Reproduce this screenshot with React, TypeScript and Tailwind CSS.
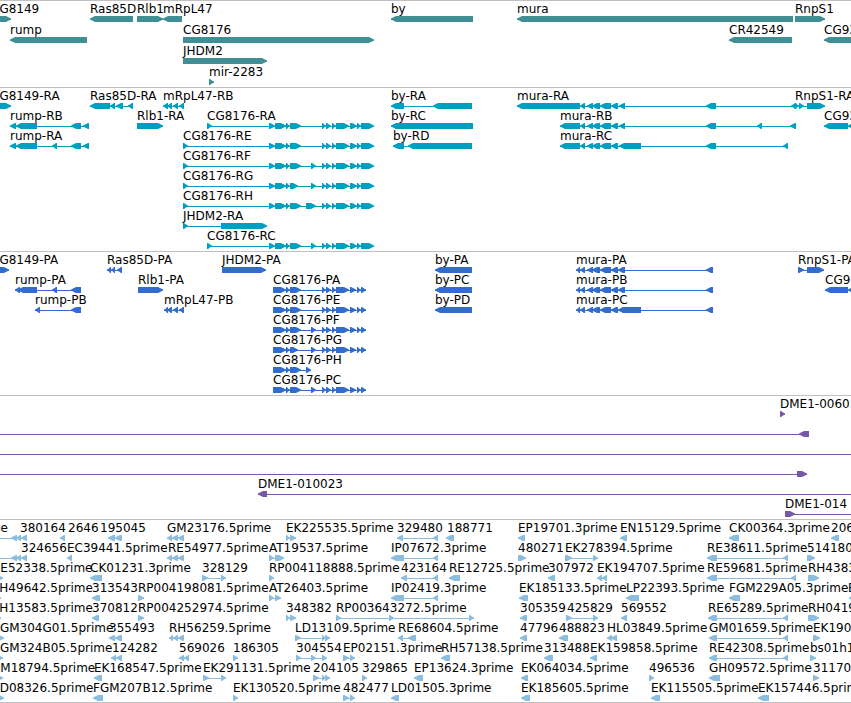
type Dir = "L" | "R";
type Exon = [number, number];

interface Feature {
  name?: string;
  at: number;
  dir: Dir;
  exons: Exon[];
  span?: Exon;
}

interface TrackData {
  title: string;
  color: string;
  rowClass: string;
  padClass: string;
  rows: Feature[][];
}

const f = (name: string, at: number, dir: Dir, ...exons: Exon[]): Feature => ({ name, at, dir, exons });

const spanned = (name: string | undefined, at: number, dir: Dir, span: Exon, ...exons: Exon[]): Feature => ({
  name,
  at,
  dir,
  exons,
  span,
});

const genes: Feature[][] = [
  [
    f("CG8149", -9, "R", [-9, 11]),
    f("Ras85D", 90, "L", [90, 133]),
    f("Rlb1", 137, "R", [137, 163]),
    f("mRpL47", 163, "L", [163, 182]),
    f("by", 391, "L", [391, 473]),
    f("mura", 517, "L", [517, 793]),
    f("RnpS1", 795, "R", [795, 825]),
  ],
  [
    f("rump", 10, "L", [10, 87]),
    f("CG8176", 183, "R", [183, 374]),
    f("CR42549", 729, "L", [729, 792]),
    f("CG9373", 824, "L", [824, 880]),
  ],
  [f("JHDM2", 183, "R", [183, 267])],
  [f("mir-2283", 209, "R", [209, 214])],
];

const cgHead: Exon[] = [[269, 275], [275, 286], [286, 290], [290, 301]];
const cgHeadShort: Exon[] = [[269, 275], [275, 286], [286, 290], [290, 298]];
const cgTail: Exon[] = [[322, 326], [326, 331], [332, 336], [336, 349], [350, 357], [357, 361], [361, 374]];
const muraMid: Exon[] = [[580, 585], [587, 593], [592, 600], [600, 611], [611, 618]];
const mrp: Exon[] = [[163, 168], [167, 172], [173, 178], [179, 184]];

const transcripts: Feature[][] = [
  [
    f("CG8149-RA", -9, "R", [-9, 11]),
    f("Ras85D-RA", 90, "L", [90, 110], [110, 115], [116, 123], [128, 133]),
    f("mRpL47-RB", 163, "L", ...mrp),
    f("by-RA", 391, "L", [391, 404], [433, 472]),
    f("mura-RA", 517, "L", [517, 580], ...muraMid, [619, 625], [706, 716], [791, 796]),
    f("RnpS1-RA", 795, "R", [795, 799], [799, 804], [807, 825]),
  ],
  [
    f("rump-RB", 10, "L", [10, 16], [16, 37], [71, 81], [83, 89]),
    f("Rlb1-RA", 137, "R", [137, 163]),
    f("CG8176-RA", 207, "R", [207, 212], ...cgHead, ...cgTail),
    f("by-RC", 391, "L", [391, 473]),
    f("mura-RB", 560, "L", [560, 580], ...muraMid, [619, 625], [706, 716], [757, 762], [790, 796]),
    f("CG9373-RA", 824, "L", [824, 848], [848, 854]),
  ],
  [
    f("rump-RA", 10, "L", [10, 16], [16, 37], [52, 57], [71, 81], [83, 89]),
    f("CG8176-RE", 183, "R", [183, 188], ...cgHead, ...cgTail),
    f("by-RD", 393, "L", [393, 404], [408, 472]),
    f("mura-RC", 560, "L", [560, 580], ...muraMid, [619, 641], [706, 716], [783, 788]),
  ],
  [f("CG8176-RF", 183, "R", [183, 188], ...cgHead, [311, 316], ...cgTail)],
  [f("CG8176-RG", 183, "R", [183, 188], ...cgHeadShort, [311, 316], ...cgTail)],
  [f("CG8176-RH", 183, "R", [183, 188], ...cgHead, [306, 316], ...cgTail)],
  [f("JHDM2-RA", 183, "R", [183, 188], [221, 267])],
  [f("CG8176-RC", 207, "R", [207, 212], ...cgHead, [311, 316], ...cgTail)],
];

const pHead: Exon[] = [[273, 286], [286, 290], [290, 301]];
const pTail: Exon[] = [[322, 326], [326, 331], [332, 336], [336, 349], [350, 356], [357, 361], [361, 366]];
const pMura: Exon[] = [[576, 580], [580, 585], [587, 593], [592, 600], [600, 611], [611, 618]];

const proteins: Feature[][] = [
  [
    f("CG8149-PA", -9, "R", [-9, 9]),
    f("Ras85D-PA", 107, "L", [107, 111], [111, 115], [117, 122]),
    f("JHDM2-PA", 222, "R", [222, 266]),
    f("by-PA", 435, "L", [435, 472]),
    f("mura-PA", 576, "L", ...pMura, [618, 625], [706, 713]),
    f("RnpS1-PA", 798, "R", [798, 804], [807, 824]),
  ],
  [
    f("rump-PA", 15, "L", [15, 20], [18, 37], [52, 57], [71, 81]),
    f("Rlb1-PA", 138, "R", [138, 163]),
    f("CG8176-PA", 273, "R", ...pHead, ...pTail),
    f("by-PC", 435, "L", [435, 472]),
    f("mura-PB", 576, "L", ...pMura, [618, 625], [706, 713]),
    f("CG9373-PA", 825, "L", [825, 848], [848, 854]),
  ],
  [
    f("rump-PB", 35, "L", [35, 40], [71, 81]),
    f("mRpL47-PB", 164, "L", [164, 168], [167, 172], [173, 178], [179, 184]),
    f("CG8176-PE", 273, "R", ...pHead, ...pTail),
    f("by-PD", 435, "L", [435, 472]),
    f("mura-PC", 576, "L", ...pMura, [618, 641], [706, 713]),
  ],
  [f("CG8176-PF", 273, "R", ...pHead, [311, 316], ...pTail)],
  [f("CG8176-PG", 273, "R", [273, 286], [286, 290], [290, 298], [311, 316], ...pTail)],
  [f("CG8176-PH", 273, "R", ...pHead, [306, 311])],
  [f("CG8176-PC", 273, "R", ...pHead, [311, 316], ...pTail)],
];

const oligos: Feature[][] = [
  [f("DME1-0060", 780, "R", [780, 785])],
  [spanned(undefined, 0, "L", [-10, 809], [799, 809])],
  [spanned(undefined, 0, "R", [-10, 4000])],
  [spanned(undefined, 0, "R", [-10, 807], [797, 807])],
  [spanned("DME1-010023", 258, "L", [258, 4000], [258, 267])],
  [spanned("DME1-014", 785, "R", [785, 4000], [785, 795])],
];

const gmTriple: Exon[] = [[167, 172], [172, 178], [178, 184]];
const leftGroup: Exon[] = [[11, 17], [16, 21], [21, 27]];

const ests: Feature[][] = [
  [
    spanned("prime", -27, "L", [-10, 27], ...leftGroup),
    f("380164", 20, "L", [60, 65]),
    f("2646", 68, "L"),
    f("195045", 100, "L", [108, 115], [115, 122]),
    f("GM23176.5prime", 167, "L", ...gmTriple),
    f("EK225535.5prime", 286, "R", [286, 290], [290, 296]),
    f("329480", 397, "L", [397, 403], [433, 438]),
    f("188771", 447, "L", [446, 454]),
    f("EP19701.3prime", 518, "L", [518, 525]),
    f("EN15129.5prime", 620, "L", [620, 627]),
    f("CK00364.3prime", 729, "L", [729, 739]),
    f("206012", 831, "L", [831, 839]),
  ],
  [
    spanned("324656", 21, "L", [-10, 27], ...leftGroup),
    f("EC39441.5prime", 67, "L", [67, 72]),
    f("RE54977.5prime", 168, "L", ...gmTriple),
    f("AT19537.5prime", 269, "R", [269, 274], [275, 284]),
    f("IP07672.3prime", 391, "L", [391, 404], [433, 438]),
    f("480271", 518, "R", [518, 526]),
    f("EK278394.5prime", 565, "R", [565, 572], [593, 598]),
    f("RE38611.5prime", 707, "L", [707, 717], [783, 788]),
    f("514180", 807, "R", [807, 815]),
  ],
  [
    f("RE52338.5prime", -8, "R", [-5, 3]),
    f("CK01231.3prime", 90, "L", [90, 102]),
    f("328129", 202, "R", [202, 208], [221, 226]),
    f("RP004118888.5prime", 269, "R", [269, 274]),
    f("423164", 401, "L", [401, 407], [433, 438]),
    f("RE12725.5prime", 449, "L", [449, 460]),
    f("307972", 548, "L", [548, 555]),
    f("EK194707.5prime", 597, "L", [597, 602], [602, 607]),
    f("RE59681.5prime", 707, "L", [707, 717], [791, 796]),
    f("RH43831", 808, "R", [808, 819]),
  ],
  [
    f("RH49642.5prime", -9, "R", [-4, 1]),
    f("313543", 92, "L", [92, 100]),
    f("RP004198081.5prime", 138, "R", [138, 144]),
    f("AT26403.5prime", 269, "R", [269, 274], [275, 281]),
    f("IP02419.3prime", 391, "L", [391, 404], [433, 438]),
    f("EK185133.5prime", 519, "L", [519, 528]),
    f("LP22393.5prime", 626, "L", [626, 639]),
    f("FGM229A05.3prime", 729, "L", [729, 740]),
    f("EK", 848, "L", [849, 860]),
  ],
  [
    f("RH13583.5prime", -9, "R", [-4, 1]),
    f("370812", 92, "L", [92, 99]),
    f("RP004252974.5prime", 138, "R", [138, 144]),
    f("348382", 286, "R", [286, 290], [290, 296]),
    f("RP003643272.5prime", 336, "R", [336, 341], [389, 394], [469, 474]),
    f("305359", 520, "L", [520, 527]),
    f("425829", 567, "R", [566, 572], [593, 598]),
    f("569552", 621, "L", [621, 627]),
    f("RE65289.5prime", 708, "L", [708, 717], [783, 788]),
    f("RH04192", 808, "R", [808, 819]),
  ],
  [
    f("FGM304G01.5prime", -7, "R", [-4, 4]),
    f("355493", 109, "L", [109, 115], [115, 122]),
    f("RH56259.5prime", 169, "L", [169, 173], [173, 178], [178, 184]),
    f("LD13109.5prime", 295, "R", [295, 301], [322, 326], [325, 330]),
    f("RE68604.5prime", 398, "L", [398, 403], [408, 416]),
    f("47796", 520, "L", [520, 527]),
    f("488823", 559, "L", [559, 568]),
    f("HL03849.5prime", 607, "L", [607, 612], [611, 617]),
    f("GM01659.5prime", 709, "L", [709, 717], [783, 788]),
    f("EK190112", 813, "R", [813, 820]),
  ],
  [
    f("FGM324B05.5prime", -7, "R", [-4, 3]),
    f("124282", 112, "L", [111, 116], [116, 122]),
    f("569026", 179, "L", [179, 184], [184, 189]),
    f("186305", 233, "R", [233, 238]),
    f("304554", 296, "R", [296, 301], [311, 316], [322, 327]),
    f("EP02151.3prime", 343, "R", [343, 349], [350, 355]),
    f("RH57138.5prime", 441, "L", [441, 450]),
    f("313488", 544, "L", [544, 553]),
    f("EK159858.5prime", 590, "L", [590, 597]),
    f("RE42308.5prime", 709, "L", [709, 717], [783, 788]),
    f("bs01h10", 810, "R", [810, 816]),
  ],
  [
    f("GM18794.5prime", -9, "R", [-4, 3]),
    f("EK168547.5prime", 94, "L", [94, 102]),
    f("EK291131.5prime", 203, "R", [203, 209], [221, 226]),
    f("204105", 313, "R", [313, 319], [322, 326], [325, 330]),
    f("329865", 362, "R", [362, 367]),
    f("EP13624.3prime", 414, "L", [414, 423]),
    f("EK064034.5prime", 521, "L", [521, 528]),
    f("496536", 649, "R", [649, 654]),
    f("GH09572.5prime", 709, "L", [709, 720]),
    f("311701", 813, "R", [813, 819]),
  ],
  [
    f("LD08326.5prime", -7, "R", [-4, 4]),
    f("FGM207B12.5prime", 93, "L", [93, 103]),
    f("EK130520.5prime", 233, "R", [233, 238]),
    f("482477", 343, "R", [343, 349], [350, 355]),
    f("LD01505.3prime", 391, "L", [391, 399]),
    f("EK185605.5prime", 521, "L", [521, 530]),
    f("EK115505.5prime", 651, "L", [651, 660]),
    f("EK157446.5prime", 758, "L", [758, 769]),
  ],
];

const tracks: TrackData[] = [
  { title: "Genes", color: "text-[#3f8f94]", rowClass: "h-[21px]", padClass: "pb-0.5", rows: genes },
  { title: "Transcripts", color: "text-[#009fc1]", rowClass: "h-5", padClass: "pb-[3px]", rows: transcripts },
  { title: "Proteins", color: "text-[#316cce]", rowClass: "h-5", padClass: "pb-[3px]", rows: proteins },
  { title: "Oligos", color: "text-[#7658a7]", rowClass: "h-5", padClass: "pb-[3px]", rows: oligos },
  { title: "ESTs", color: "text-[#8abddf]", rowClass: "h-5", padClass: "pb-0.5", rows: ests },
];

/* One exon: a 6px bar whose leading end rounds down to a blunt arrow tip. */
function exonPoints([a, b]: Exon, dir: Dir) {
  const head = Math.min(5, b - a - 1);
  const tip = dir === "R" ? b : a;
  const tail = dir === "R" ? a : b;
  const s = dir === "R" ? -1 : 1;
  const neck = tip + s * head;
  const mid = tip + s * 2;
  return `${tail},0 ${neck},0 ${mid},1.5 ${tip},2.5 ${tip},3.5 ${mid},4.5 ${neck},6 ${tail},6`;
}

function Glyph({ feature }: { feature: Feature }) {
  const { exons, dir, span } = feature;
  if (!span && exons.length === 0) return null;
  const from = span ? span[0] : exons[0][0];
  const to = span ? span[1] : exons[exons.length - 1][1];
  return (
    <g>
      <rect x={from} y={3} width={to - from} height={1} />
      {exons.map((e, i) => (
        <polygon key={i} points={exonPoints(e, dir)} />
      ))}
    </g>
  );
}

function Row({ features, className }: { features: Feature[]; className: string }) {
  return (
    <div className={`relative ${className}`}>
      <div className="h-[15px] text-black">
        {features.map((x, i) =>
          x.name ? (
            <span key={i} className="absolute top-0 whitespace-nowrap" style={{ left: x.at }}>
              {x.name}
            </span>
          ) : null,
        )}
      </div>
      <svg className="block h-1.5 w-full overflow-visible" fill="currentColor" aria-hidden="true">
        {features.map((x, i) => (
          <Glyph key={i} feature={x} />
        ))}
      </svg>
    </div>
  );
}

export default function App() {
  return (
    <main className="w-full overflow-hidden border-b border-[#c0c0c0] bg-white font-['DejaVu_Sans',sans-serif] text-[12px] leading-[17px]">
      {tracks.map((t) => (
        <section key={t.title} aria-label={t.title} className={`border-t border-[#c0c0c0] ${t.padClass} ${t.color}`}>
          {t.rows.map((r, i) => (
            <Row key={i} features={r} className={t.rowClass} />
          ))}
        </section>
      ))}
    </main>
  );
}
